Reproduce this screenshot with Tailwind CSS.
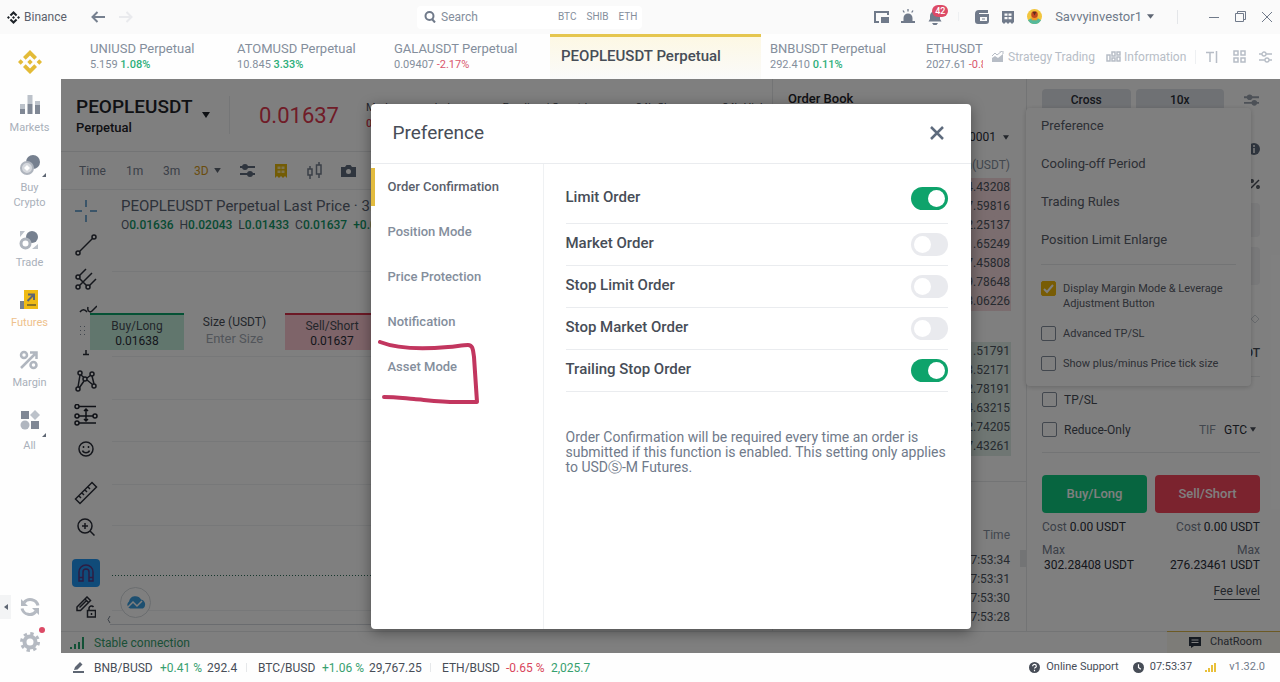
<!DOCTYPE html>
<html lang="en">
<head>
    <meta charset="UTF-8">
    <meta name="viewport" content="width=device-width, initial-scale=1.0">
    <title>Binance - PEOPLEUSDT Perpetual</title>
    <script src="https://cdn.jsdelivr.net/npm/@tailwindcss/browser@4"></script>
</head>
<body class="flex flex-col h-screen overflow-hidden bg-[#fefefe] font-[Roboto,sans-serif] text-[#1e2329] text-xs">

    <!-- Title bar -->
    <header class="flex items-center justify-between h-[34px] shrink-0 bg-[#fafafa]">
        <div class="flex items-center pl-[7px] w-[417px]">
            <svg class="w-[13px] h-[13px]" viewBox="0 0 24 24" fill="#1e2329"><path d="M12 0l7 7-2.7 2.7L12 5.4 7.700 9.700 5 7zM2.700 9.300L5.400 12l-2.700 2.700L0 12zM21.300 9.300L24 12l-2.700 2.700-2.700-2.700zM12 9.300l2.700 2.700-2.700 2.700L9.300 12zM7.700 14.300l4.300 4.300 4.300-4.300L19 17l-7 7-7-7z"/></svg>
            <span class="ml-1 text-[#5a606b]">Binance</span>
            <button class="ml-[24px]" aria-label="Back"><svg class="w-[14px] h-[12px]" viewBox="0 0 14 12" fill="none" stroke="#76808f" stroke-width="2"><path d="M14 6H2M6.500 1L1.500 6l5 5"/></svg></button>
            <button class="ml-[14px]" aria-label="Forward"><svg class="w-[14px] h-[12px]" viewBox="0 0 14 12" fill="none" stroke="#e9eaed" stroke-width="2"><path d="M0 6h12M7.500 1l5 5-5 5"/></svg></button>
        </div>
        <div class="flex items-center w-[225px] h-[23px] bg-white rounded px-[7px] text-[10px] text-[#848e9c]">
            <svg class="w-[12px] h-[12px] shrink-0" viewBox="0 0 12 12" fill="none" stroke="#707a8a" stroke-width="2"><circle cx="5.500" cy="5" r="4"/><path d="M8 8l3 3.500"/></svg>
            <input type="text" aria-label="Search" placeholder="Search" class="ml-[5px] w-[117px] text-xs placeholder:text-[#848e9c] outline-none">
            <a href="#" class="mr-[10px]">BTC</a>
            <a href="#" class="mr-[10px]">SHIB</a>
            <a href="#">ETH</a>
        </div>
        <div class="flex items-center justify-end w-[638px] pr-[8px]">
            <svg class="w-[15px] h-[12px]" viewBox="0 0 15 12" fill="none"><path d="M14 4V1H1v10h4" stroke="#707a8a" stroke-width="2"/><path d="M7 6h8v6H7z" fill="#707a8a"/></svg>
            <svg class="ml-[11px] w-[16px] h-[16px]" viewBox="0 0 16 16" fill="#707a8a"><path d="M3.500 12V9a4.500 4.500 0 019 0v3H15v2H1v-2z"/><path d="M8 0v2.500M3 1.500l1.300 2M13 1.500l-1.300 2" stroke="#707a8a" stroke-width="1.300"/></svg>
            <div class="relative ml-[11px]">
                <svg class="w-[16px] h-[16px]" viewBox="0 0 16 16" fill="#707a8a"><path d="M3 10V7a5 5 0 0110 0v3l1.500 2.500h-13zM5 14h6l-1.500 2h-3z"/></svg>
                <span class="absolute -top-[4px] left-[5px] px-[3px] h-[12px] leading-[12px] rounded-full bg-[#dc4a66] text-white text-[9px] font-medium">42</span>
            </div>
            <span class="ml-[15px] w-px h-[9px] bg-[#eef0f2]"></span>
            <svg class="ml-[16px] w-[14px] h-[14px]" viewBox="0 0 14 14"><path d="M4 0h9v3H4v1h10v7a3 3 0 01-3 3H3a3 3 0 01-3-3V4a4 4 0 014-4z" fill="#707a8a"/><rect x="5" y="7" width="7" height="4" fill="#fafafa"/><path d="M7 8.500h3v1H7z" fill="#707a8a"/></svg>
            <svg class="ml-[13px] w-[12px] h-[14px]" viewBox="0 0 12 14"><path d="M0 1h12v11l-2 2-2-2-2 2-2-2-2 2-2-2z" fill="#707a8a"/><path d="M2.500 3.500h3v2.200h-3zM6.500 3.500h3v2.200h-3zM2.500 7h3v2.200h-3zM6.500 7h3v2.200h-3z" fill="#fafafa"/></svg>
            <svg class="ml-[13px] w-[15px] h-[15px]" viewBox="0 0 16 16"><circle cx="8" cy="8" r="8" fill="#f2c53d"/><path d="M1 12a8 8 0 0014 0l-3-2H4z" fill="#55b99b"/><path d="M4 9h8l-1.500 3h-5z" fill="#eb9928"/><circle cx="8" cy="6" r="3.500" fill="#c0491f"/><path d="M6 3h4l-2 4z" fill="#5b2c1d"/></svg>
            <button class="flex items-center ml-[13px] text-[13px] text-[#707a8a]">Savvyinvestor1
                <svg class="ml-[5px] w-[7px] h-[5px]" viewBox="0 0 8 5" fill="#5e6673"><path d="M0 0h8L4 5z"/></svg>
            </button>
            <span class="ml-[23px] w-px h-[14px] bg-[#e4e6e9]"></span>
            <button class="ml-[31px]" aria-label="Minimize"><svg class="w-[10px] h-[12px]" viewBox="0 0 10 12" stroke="#707a8a"><path d="M0 6.500h10"/></svg></button>
            <button class="ml-[16px]" aria-label="Restore"><svg class="w-[11px] h-[11px]" viewBox="0 0 11 11" fill="none" stroke="#707a8a"><path d="M.5 2.500h8v8h-8zM2.500 2.500v-2h8v8h-2"/></svg></button>
            <button class="ml-[16px]" aria-label="Close window"><svg class="w-[10px] h-[10px]" viewBox="0 0 10 10" stroke="#707a8a"><path d="M0 0l10 10M10 0L0 10"/></svg></button>
        </div>
    </header>

    <div class="flex flex-1 min-h-0">

        <!-- Side navigation -->
        <nav class="relative flex flex-col items-center w-[61px] shrink-0 pr-[2px] text-[11px] text-[#a9b0ba] leading-[15px] text-center">
            <svg class="mt-[16px] w-[24px] h-[24px]" viewBox="0 0 24 24" fill="#e3bb37"><path d="M12 0l7 7-2.700 2.700L12 5.400 7.700 9.700 5 7zM2.700 9.300L5.400 12l-2.700 2.700L0 12zM21.300 9.300L24 12l-2.700 2.700-2.700-2.700zM12 9.300l2.700 2.700-2.700 2.700L9.300 12zM7.700 14.300l4.300 4.300 4.300-4.300L19 17l-7 7-7-7z"/></svg>
            <a href="#" class="flex flex-col items-center gap-[5px] mt-[21px]">
                <svg class="w-[20px] h-[20px]" viewBox="0 0 20 20"><path d="M0 9h5v9H0zM7.500 0h5v9h-5zM15 6h5v5h-5z" fill="#bcc2ca"/><path d="M0 14h5v5H0zM7.500 9h5v10h-5zM15 10h5v9h-5z" fill="#808895"/></svg>
                Markets
            </a>
            <a href="#" class="relative flex flex-col items-center gap-[5px] mt-5">
                <svg class="w-[20px] h-[20px]" viewBox="0 0 20 20"><circle cx="13" cy="7" r="7" fill="#76808f"/><circle cx="7" cy="13" r="6" fill="#d5d8dd" stroke="#aeb4bd" stroke-width="2"/><path d="M7 10l3 3-3 3-3-3z" fill="#fff"/></svg>
                <span class="w-[40px]">Buy Crypto</span>
                <svg class="absolute top-[18px] left-[32px] w-[4px] h-[4px]" viewBox="0 0 4 4" fill="#5e6673"><path d="M4 0v4H0z"/></svg>
            </a>
            <a href="#" class="flex flex-col items-center gap-[5px] mt-5">
                <svg class="w-[20px] h-[20px]" viewBox="0 0 20 20"><circle cx="13" cy="7" r="6" fill="#76808f"/><circle cx="6.500" cy="13.500" r="4.500" fill="#fff" stroke="#aeb4bd" stroke-width="3"/><path d="M1 7V1h5zM19 14v5h-6z" fill="#bcc2ca"/></svg>
                Trade
            </a>
            <a href="#" class="flex flex-col items-center gap-[5px] mt-5 text-[#eec18c]">
                <svg class="w-[20px] h-[20px]" viewBox="0 0 20 20"><path d="M1 11h6v8H1z" fill="#76808f"/><path d="M5 0h14v19H5z" fill="#efbb15"/><path d="M8.500 11l6-6M9 4.500h6V10" fill="none" stroke="#5e6673" stroke-width="2"/><path d="M8 15h9" stroke="#8a7426" stroke-width="2"/></svg>
                Futures
            </a>
            <a href="#" class="flex flex-col items-center gap-[5px] mt-5">
                <svg class="w-[20px] h-[20px]" viewBox="0 0 20 20" fill="none" stroke="#b0b6bf" stroke-width="2.500"><circle cx="5" cy="5" r="3"/><circle cx="14.500" cy="15" r="3"/><path d="M2 18L16 4M11 2.500h6.500V9"/></svg>
                Margin
            </a>
            <a href="#" class="relative flex flex-col items-center gap-[8px] mt-5">
                <svg class="w-[20px] h-[20px]" viewBox="0 0 20 20"><path d="M1 1h8v8H1zM11 11h8v8h-8z" fill="#808895"/><path d="M15 0l5 5-5 5-5-5z" fill="#bcc2ca"/><circle cx="5" cy="15" r="4.500" fill="#b0b6bf"/></svg>
                All
                <svg class="absolute top-[23px] left-[22px] w-[4px] h-[4px]" viewBox="0 0 4 4" fill="#5e6673"><path d="M4 0v4H0z"/></svg>
            </a>
            <button class="mt-auto" aria-label="Refresh"><svg class="w-[20px] h-[20px]" viewBox="0 0 20 20" fill="none" stroke="#b5bac2" stroke-width="3"><path d="M18 8.500A8 8 0 004 5.500M2 11.500a8 8 0 0014 3"/><path d="M1 2v7h7zM19 18v-7h-7z" fill="#b5bac2" stroke="none"/></svg></button>
            <button class="relative mt-[15px] mb-px" aria-label="Settings">
                <svg class="w-[20px] h-[20px]" viewBox="0 0 20 20" fill="none" stroke="#b5bac2"><circle cx="10" cy="10" r="5.500" stroke-width="4"/><circle cx="10" cy="10" r="8.500" stroke-width="3" stroke-dasharray="3.340 3.340"/></svg>
                <span class="absolute -top-[5px] left-[19px] w-[6px] h-[6px] rounded-full bg-[#dc4a66]"></span>
            </button>
            <button class="absolute left-0 bottom-[34px] w-[11px] h-[24px] bg-[#f3f4f5] flex items-center justify-center" aria-label="Collapse menu"><svg class="w-[4px] h-[6px]" viewBox="0 0 4 6" fill="#5e6673"><path d="M4 0v6L0 3z"/></svg></button>
        </nav>

        <main class="flex flex-col flex-1 min-w-0">

            <!-- Market tabs -->
            <div class="flex items-center h-[45px] shrink-0">
                <div class="flex flex-1 h-full min-w-0 overflow-hidden pl-[29px] whitespace-nowrap text-[11px] leading-[15px] text-[#848e9c]">
                    <a href="#" class="w-[147px] shrink-0 pt-[6px]"><span class="block text-[13px] leading-[17px]">UNIUSD Perpetual</span>5.159 <span class="text-[#2dae7a] font-medium">1.08%</span></a>
                    <a href="#" class="w-[157px] shrink-0 pt-[6px]"><span class="block text-[13px] leading-[17px]">ATOMUSD Perpetual</span>10.845 <span class="text-[#2dae7a] font-medium">3.33%</span></a>
                    <a href="#" class="w-[156px] shrink-0 pt-[6px]"><span class="block text-[13px] leading-[17px]">GALAUSDT Perpetual</span>0.09407 <span class="text-[#d9566c]">-2.17%</span></a>
                    <a href="#" class="flex items-center w-[211px] shrink-0 px-[11px] pb-[4px] border-t-[3px] border-[#e5c64f] bg-linear-to-b from-[#fdf8e4] to-[#fafafa] text-[15px] font-medium text-[#474d57]">PEOPLEUSDT Perpetual</a>
                    <a href="#" class="w-[165px] shrink-0 pl-[9px] pt-[6px]"><span class="block text-[13px] leading-[17px]">BNBUSDT Perpetual</span>292.410 <span class="text-[#2dae7a] font-medium">0.11%</span></a>
                    <a href="#" class="w-[157px] shrink-0 pt-[6px]"><span class="block text-[13px] leading-[17px]">ETHUSDT Perpetual</span>2027.61 <span class="text-[#d9566c]">-0.82%</span></a>
                </div>
                <div class="flex items-center w-[297px] shrink-0 pl-[9px] pr-[8px] text-[#b7bdc6]">
                    <button class="flex items-center"><svg class="w-[12px] h-[12px] mr-1" viewBox="0 0 12 12"><path d="M0 11V7l3-2 3 2 5-4v8z" fill="#b7bdc6"/><path d="M0 5l3-3 2 2 5-4M7.500 0H11v3" fill="none" stroke="#b7bdc6"/></svg>Strategy Trading</button>
                    <button class="flex items-center ml-[11px]"><svg class="w-[15px] h-[11px] mr-[3px]" viewBox="0 0 15 11" fill="none" stroke="#b7bdc6" stroke-width="1.500"><path d="M1 4h3v6H1zM6 1h3v4H6zM6 7h3v3H6zM11 1h3v3h-3zM11 6h3v4h-3z"/></svg>Information</button>
                    <span class="ml-[9px] w-px h-[14px] bg-[#eef0f2]"></span>
                    <button class="ml-[10px]" aria-label="Text size"><svg class="w-[12px] h-[12px]" viewBox="0 0 12 12" fill="none" stroke="#b7bdc6" stroke-width="1.500"><path d="M0 1.500h8M4 1.500V11M10.500 0v12"/></svg></button>
                    <button class="ml-auto" aria-label="Layout"><svg class="w-[13px] h-[13px]" viewBox="0 0 13 13" fill="none" stroke="#b7bdc6" stroke-width="1.500"><path d="M1 1h4v4H1zM8 1h4v4H8zM1 8h4v4H1zM8 8h4v4H8z"/></svg></button>
                    <button class="ml-[13px]" aria-label="Display options"><svg class="w-[13px] h-[12px]" viewBox="0 0 13 12" fill="none" stroke="#b7bdc6" stroke-width="1.300"><path d="M0 3h3M7 3h6M0 9h6M10 9h3"/><circle cx="5" cy="3" r="2"/><circle cx="8" cy="9" r="2"/></svg></button>
                </div>
            </div>

            <!-- Trading workspace -->
            <div class="relative flex flex-col flex-1 min-h-0 bg-white">
                <div class="flex flex-1 min-h-0">

                    <!-- Chart -->
                    <section class="flex flex-col flex-1 min-w-0 overflow-hidden">
                        <div class="flex h-[73px] shrink-0 border-b border-[#e6e8ea] pl-[15px] whitespace-nowrap">
                            <div class="flex items-center w-[154px] shrink-0 my-[17px] border-r border-[#eaecef]">
                                <div class="pt-[4px]">
                                    <h1 class="text-[19px] leading-[22px] font-medium">PEOPLEUSDT</h1>
                                    <p class="text-[13px] leading-[20px] font-medium">Perpetual</p>
                                </div>
                                <svg class="ml-[9px] w-[8px] h-[6px]" viewBox="0 0 8 6" fill="#1e2329"><path d="M0 0h8L4 6z"/></svg>
                            </div>
                            <p class="pl-[29px] w-[136px] shrink-0 text-[22px] leading-[73px] text-[#e0394f]">0.01637</p>
                            <dl class="flex gap-[28px] pt-[21px] text-[11px] leading-[16px] text-[#474d57]">
                                <div><dt>Mark</dt><dd class="text-[#e0394f] font-medium">0.01638</dd></div>
                                <div><dt>Index</dt><dd>0.01637</dd></div>
                                <div><dt>Funding / Countdown</dt><dd>0.0100%</dd></div>
                                <div><dt>24h Change</dt><dd>0.00012</dd></div>
                                <div><dt>24h High</dt><dd>0.01668</dd></div>
                            </dl>
                        </div>
                        <div class="flex items-center h-[38px] shrink-0 border-b border-[#eaecef] pl-[18px] text-[#76808f]">
                            <button class="w-[47px] text-left">Time</button>
                            <button class="w-[37px] text-left">1m</button>
                            <button class="w-[31px] text-left">3m</button>
                            <button class="flex items-center w-[46px] text-[#d49a1c]">3D<svg class="ml-[5px] w-[7px] h-[5px]" viewBox="0 0 8 6" fill="#5e6673"><path d="M0 0h8L4 6z"/></svg></button>
                            <button aria-label="Indicator settings"><svg class="w-[15px] h-[13px]" viewBox="0 0 15 13" stroke="#5e6b7d" stroke-width="2" fill="#5e6b7d"><path d="M0 3h15M0 10h15"/><circle cx="5" cy="3" r="2"/><circle cx="10" cy="10" r="2"/></svg></button>
                            <button class="ml-[20px]" aria-label="Calculator"><svg class="w-[12px] h-[14px]" viewBox="0 0 12 14"><path d="M0 0h12v14l-2-2-2 2-2-2-2 2-2-2-2 2z" fill="#e6b80b"/><path d="M2.500 2.500h3v2.500h-3zM6.500 2.500h3v2.500h-3zM2.500 6.500h3v2.500h-3zM6.500 6.500h3v2.500h-3z" fill="#fbe8a0"/></svg></button>
                            <button class="ml-[20px]" aria-label="Chart type"><svg class="w-[16px] h-[17px]" viewBox="0 0 16 17" fill="none" stroke="#76808f" stroke-width="1.500"><path d="M1 7h4v6H1zM9.500 3h4.500v9H9.500zM3 4v3M3 13v4M12 0v3M12 12v4"/></svg></button>
                            <button class="ml-[18px]" aria-label="Screenshot"><svg class="w-[15px] h-[12px]" viewBox="0 0 15 12"><path d="M0 2h4l1.500-2h4L11 2h4v10H0z" fill="#5e6b7d"/><circle cx="7.500" cy="6.500" r="2.500" fill="#fff"/></svg></button>
                        </div>
                        <div class="relative flex flex-1 min-h-0">
                            <div class="flex flex-col items-center w-[49px] shrink-0 pt-[4px] text-[#1e2329]">
                                <button class="grid place-items-center h-[34px]" aria-label="Crosshair"><svg class="w-[22px] h-[22px]" viewBox="0 0 22 22" fill="none" stroke="#4a90c4" stroke-width="1.500"><path d="M11 0v7M11 15v7M0 11h7M15 11h7"/></svg></button>
                                <button class="grid place-items-center h-[34px]" aria-label="Trend line"><svg class="w-[22px] h-[22px]" viewBox="0 0 22 22" fill="none" stroke="#2a2e39" stroke-width="1.500"><circle cx="3" cy="19" r="2"/><circle cx="19" cy="3" r="2"/><path d="M4.500 17.500l13-13"/></svg></button>
                                <button class="grid place-items-center h-[34px]" aria-label="Pitchfork"><svg class="w-[22px] h-[22px]" viewBox="0 0 22 22" fill="none" stroke="#2a2e39" stroke-width="1.500"><circle cx="3" cy="9" r="2"/><circle cx="3" cy="19" r="2"/><circle cx="13" cy="19" r="2"/><path d="M4.500 7.500L11 1M4.500 17.500L17 5M14.500 17.500L21 11M4.500 10.500l7 7"/></svg></button>
                                <button class="grid place-items-center h-[34px]" aria-label="Brush"><svg class="w-[22px] h-[22px]" viewBox="0 0 22 22" fill="none" stroke="#2a2e39" stroke-width="1.500"><path d="M5 10c2-3 5-3 7 0M13 5c-1 4 2 6 4 4l5-5M4 18c3 2 8 0 8-5"/></svg></button>
                                <button class="grid place-items-center h-[34px]" aria-label="Text"><svg class="w-[22px] h-[22px]" viewBox="0 0 22 22" fill="none" stroke="#2a2e39" stroke-width="1.500"><path d="M3 4V1h16v3M11 1v18M8 18.500h6"/></svg></button>
                                <button class="grid place-items-center h-[34px]" aria-label="Patterns"><svg class="w-[22px] h-[22px]" viewBox="0 0 22 22" fill="none" stroke="#2a2e39" stroke-width="1.500"><circle cx="5" cy="3" r="2"/><circle cx="17" cy="4" r="2"/><circle cx="10" cy="9" r="2"/><circle cx="3" cy="19" r="2"/><circle cx="19" cy="16" r="2"/><path d="M5 5L3 17M4.500 17.500L9 11M6 5l3 2.500M12 8l4-3M12 10l5.500 4.500M17 6l2 8"/></svg></button>
                                <button class="grid place-items-center h-[34px]" aria-label="Forecast"><svg class="w-[24px] h-[22px]" viewBox="0 0 24 22" fill="none" stroke="#1e222d" stroke-width="1.500"><circle cx="3" cy="2.500" r="2"/><circle cx="3" cy="12" r="2"/><circle cx="3" cy="19" r="2"/><circle cx="21" cy="12" r="2"/><path d="M5 2.500h17M5 12h14M5 19h17M12 5v12M10 7l2-2 2 2M10 15l2 2 2-2"/></svg></button>
                                <button class="grid place-items-center h-[34px]" aria-label="Icons"><svg class="w-[16px] h-[16px]" viewBox="0 0 16 16" fill="none" stroke="#2a2e39" stroke-width="1.500"><circle cx="8" cy="8" r="7"/><path d="M4.500 9.500c1 3 6 3 7 0M5.500 5v2M10.500 5v2"/></svg></button>
                                <button class="grid place-items-center h-[34px] mt-[10px]" aria-label="Measure"><svg class="w-[24px] h-[24px]" viewBox="0 0 24 24" fill="none" stroke="#2a2e39" stroke-width="1.500"><path d="M1.500 18L18 1.500 22.500 6 6 22.500zM5 15l2 2M8 12l2 2M11 9l2 2M14 6l2 2"/></svg></button>
                                <button class="grid place-items-center h-[34px]" aria-label="Zoom in"><svg class="w-[18px] h-[18px]" viewBox="0 0 18 18" fill="none" stroke="#2a2e39" stroke-width="1.500"><circle cx="8" cy="8" r="7"/><path d="M13 13l4.500 4.500M8 5v6M5 8h6"/></svg></button>
                                <button class="grid place-items-center w-[28px] h-[28px] mt-[15px] rounded bg-[#2196f3]" aria-label="Magnet"><svg class="w-[16px] h-[18px]" viewBox="0 0 16 18" fill="none" stroke="#5a3a86" stroke-width="1.500"><path d="M1 17V8a7 7 0 0114 0v9h-4V8a3 3 0 00-6 0v9zM1 13.500h4M11 13.500h4"/></svg></button>
                                <button class="grid place-items-center h-[34px] mt-[3px]" aria-label="Lock drawings"><svg class="w-[20px] h-[22px]" viewBox="0 0 20 22" fill="none" stroke="#2a2e39" stroke-width="1.500"><path d="M1 11L11 1l3.500 3.500-10 10H1zM9 3l3.500 3.500M3.500 11.500L10 5"/><path d="M11.500 14.500h8V21h-8zM13 14.500V12a2.500 2.500 0 014.500-1M15.500 17v2"/></svg></button>
                            </div>
                            <div class="flex-1">
                                <svg class="w-full h-full" fill="none" stroke="#eff1f3"><path d="M2 81.500h800M2 166.500h800M2 209.500h800M2 251.500h800M2 294.500h800M2 335.500h800M2 420.500h800"/><path d="M0 434.500h800" stroke="#d5d9de"/><path d="M2 385.500h800" stroke="#2d6f5b" stroke-dasharray="1 2"/></svg>
                            </div>
                            <div class="absolute top-[7px] left-[60px] whitespace-nowrap">
                                <p class="text-[15px] leading-[19px] text-[#5a6474]">PEOPLEUSDT Perpetual Last Price · 3D</p>
                                <p class="flex gap-[6px] text-xs leading-[19px] text-[#5a6474]">
                                    <span>O<span class="text-[#119667] font-medium">0.01636</span></span>
                                    <span>H<span class="text-[#119667] font-medium">0.02043</span></span>
                                    <span>L<span class="text-[#119667] font-medium">0.01433</span></span>
                                    <span>C<span class="text-[#119667] font-medium">0.01637</span></span>
                                    <span class="text-[#119667] font-medium">+0.00001</span>
                                </p>
                            </div>
                            <div class="absolute top-[123px] left-[13px] flex h-[37px] bg-white text-[#2a2e39] leading-[15px] text-center">
                                <svg class="w-[16px] h-full" viewBox="0 0 16 37" fill="#848e9c"><path d="M6 13h1v1H6zM10 13h1v1h-1zM6 17h1v1H6zM10 17h1v1h-1zM6 21h1v1H6zM10 21h1v1h-1z"/></svg>
                                <button class="w-[94px] pt-[3px] border-t-2 border-[#0ba56a] bg-[#c3eddb]"><span class="block text-[#474d57]">Buy/Long</span>0.01638</button>
                                <div class="flex flex-col w-[101px] pt-[1px]">
                                    <label for="size" class="leading-[17px] text-[#474d57]">Size (USDT)</label>
                                    <input id="size" type="text" placeholder="Enter Size" class="w-full text-center text-[13px] leading-[15px] placeholder:text-[#a4abb5] outline-none">
                                </div>
                                <button class="w-[94px] pt-[3px] border-t-2 border-[#d8304a] bg-[#fcc9d2]"><span class="block text-[#474d57]">Sell/Short</span>0.01637</button>
                            </div>
                            <button class="absolute bottom-[13px] left-[59px] grid place-items-center w-[31px] h-[31px] rounded-full bg-white border border-[#d5dade]" aria-label="TradingView"><svg class="w-[20px] h-[13px]" viewBox="0 0 20 13"><path d="M4 12.500a4 4 0 01-1-7 6.500 6.500 0 0112-2 5 5 0 012 9z" fill="#3b9fe0"/><path d="M2 11l5-5 4 4 5-5" fill="none" stroke="#fff" stroke-width="1.500"/></svg></button>
                            <svg class="absolute bottom-[8px] left-[46px] w-[4px] h-[7px]" viewBox="0 0 4 7" fill="none" stroke="#76808f"><path d="M3 0L1 3.500 3 7"/></svg>
                        </div>
                    </section>

                    <!-- Order book and trades -->
                    <section class="flex flex-col w-[254px] shrink-0 overflow-hidden border-l border-[#e6e8ea]">
                        <div class="h-[403px] shrink-0 border-b border-[#e6e8ea]">
                            <h2 class="pl-[15px] pt-[10px] text-[13px] leading-5 font-medium">Order Book</h2>
                            <div class="flex items-center justify-end mt-[18px] pr-[17px] h-5">
                                <select aria-label="Price step" class="appearance-none w-[54px] text-right text-[#2a2e39]"><option>0.000001</option></select>
                                <svg class="ml-[7px] w-[6px] h-[5px]" viewBox="0 0 8 6" fill="#474d57"><path d="M0 0h8L4 6z"/></svg>
                            </div>
                            <table class="w-full mt-[6px] text-right leading-[19px] text-[#4d5560]">
                                <thead><tr class="h-[25px] text-[#848e9c]"><th class="pr-[16px] font-normal text-right">Sum(USDT)</th></tr></thead>
                                <tbody class="bg-linear-to-l from-white from-[15px] to-[#f6dade] to-[15px]">
                                    <tr><td class="pr-[16px]">14.43208</td></tr>
                                    <tr><td class="pr-[16px]">57.59816</td></tr>
                                    <tr><td class="pr-[16px]">42.25137</td></tr>
                                    <tr><td class="pr-[16px]">31.65249</td></tr>
                                    <tr><td class="pr-[16px]">27.45808</td></tr>
                                    <tr><td class="pr-[16px]">19.78648</td></tr>
                                    <tr><td class="pr-[16px]">13.06226</td></tr>
                                </tbody>
                            </table>
                            <table class="w-full mt-[31px] text-right leading-[19px] text-[#4d5560]">
                                <tbody class="bg-linear-to-l from-white from-[15px] to-[#deede7] to-[15px]">
                                    <tr><td class="pr-[16px]">11.51791</td></tr>
                                    <tr><td class="pr-[16px]">23.52171</td></tr>
                                    <tr><td class="pr-[16px]">32.78191</td></tr>
                                    <tr><td class="pr-[16px]">44.63215</td></tr>
                                    <tr><td class="pr-[16px]">52.74205</td></tr>
                                    <tr><td class="pr-[16px]">67.43261</td></tr>
                                </tbody>
                            </table>
                        </div>
                        <div class="relative">
                            <table class="w-full mt-[44px] text-right leading-[19px] text-[#4d5560]">
                                <thead><tr class="h-[25px] align-top text-[#848e9c]"><th class="pr-[16px] font-normal text-right">Time</th></tr></thead>
                                <tbody>
                                    <tr><td class="pr-[16px]">07:53:34</td></tr>
                                    <tr><td class="pr-[16px]">07:53:31</td></tr>
                                    <tr><td class="pr-[16px]">07:53:30</td></tr>
                                    <tr><td class="pr-[16px]">07:53:28</td></tr>
                                    <tr><td class="pr-[16px]">07:53:24</td></tr>
                                </tbody>
                            </table>
                            <span class="absolute top-[68px] right-0 w-[6px] h-[17px] bg-[#e6e8ea]"></span>
                        </div>
                    </section>

                    <!-- Order form -->
                    <section class="relative w-[254px] shrink-0 border-l border-[#e6e8ea] pl-[15px] pr-5 text-[#474d57]">
                        <div class="flex items-start gap-[5px] mt-[10px] h-[54px]">
                            <button class="flex-1 h-[22px] rounded-sm bg-[#dfe3e8] font-medium text-[#2a2e39]">Cross</button>
                            <button class="flex-1 h-[22px] rounded-sm bg-[#dfe3e8] font-medium text-[#2a2e39]">10x</button>
                            <button class="ml-[15px] pr-px pt-[4px]" aria-label="Form settings"><svg class="w-[15px] h-[14px]" viewBox="0 0 16 14" stroke="#9aa3af" stroke-width="2" fill="#9aa3af"><path d="M0 4h16M0 10h16"/><circle cx="6" cy="4" r="2"/><circle cx="11" cy="10" r="2"/></svg></button>
                        </div>
                        <div class="flex flex-col items-end h-[60px]">
                            <svg class="w-[12px] h-[12px]" viewBox="0 0 12 12"><circle cx="6" cy="6" r="6" fill="#5e6b7d"/><path d="M6 5v5M6 2v2" stroke="#fff" stroke-width="1.500"/></svg>
                            <svg class="mt-[24px] w-[10px] h-[10px]" viewBox="0 0 10 10" fill="none" stroke="#474d57" stroke-width="1.500"><path d="M1 9l8-8"/><circle cx="2" cy="2" r="1.200"/><circle cx="8" cy="8" r="1.200"/></svg>
                        </div>
                        <div class="h-[34px] rounded bg-[#f2f3f5]"></div>
                        <div class="h-[38px] mt-[10px] rounded bg-[#f2f3f5]"></div>
                        <div class="flex justify-end h-[58px] pt-[29px]"><svg class="w-[10px] h-[10px]" viewBox="0 0 10 10" fill="none" stroke="#d0d5db"><path d="M5 1l4 4-4 4-4-4z"/></svg></div>
                        <div class="flex justify-end h-[34px] border-b border-[#e6e8ea] pt-[2px] font-medium text-[#474d57]">USDT</div>
                        <label class="flex items-center gap-[7px] mt-[15px] h-[15px]"><input type="checkbox" class="appearance-none w-[15px] h-[15px] border border-[#848e9c] rounded-xs">TP/SL</label>
                        <div class="flex items-center justify-between h-[15px] mt-[15px]">
                            <label class="flex items-center gap-[7px]"><input type="checkbox" class="appearance-none w-[15px] h-[15px] border border-[#848e9c] rounded-xs">Reduce-Only</label>
                            <div class="flex items-center pr-[4px]">
                                <label for="tif" class="mr-[8px] text-[#848e9c]">TIF</label>
                                <select id="tif" class="appearance-none text-[#2a2e39]"><option>GTC</option></select>
                                <svg class="ml-[3px] w-[6px] h-[5px]" viewBox="0 0 8 6" fill="#474d57"><path d="M0 0h8L4 6z"/></svg>
                            </div>
                        </div>
                        <div class="grid grid-cols-2 gap-[8px] mt-[15px] pt-[22px] border-t border-[#e6e8ea] text-[13px] font-medium text-white">
                            <button class="h-[38px] rounded bg-[#0ecb81]">Buy/Long</button>
                            <button class="h-[38px] rounded bg-[#f6465d]">Sell/Short</button>
                        </div>
                        <div class="flex justify-between mt-[7px] leading-[15px] text-[#76808f]">
                            <p>Cost <span class="text-[#2a2e39]">0.00 USDT</span></p>
                            <p>Cost <span class="text-[#2a2e39]">0.00 USDT</span></p>
                        </div>
                        <div class="flex justify-between mt-[8px] leading-[15px] text-[#76808f]">
                            <p>Max<span class="block pl-[2px] text-[#2a2e39]">302.28408 USDT</span></p>
                            <p class="text-right">Max<span class="block text-[#2a2e39]">276.23461 USDT</span></p>
                        </div>
                        <div class="mt-[10px] text-right"><a href="#" class="inline-block leading-[15px] border-b border-[#474d57]">Fee level</a></div>

                        <!-- Settings menu -->
                        <div class="absolute top-[29px] -left-px w-[225px] h-[278px] bg-white rounded-sm shadow-[0_1px_5px_rgba(0,0,0,0.2)] px-[15px] text-[#5a606b]">
                            <div class="flex flex-col items-start gap-[18px] pt-[8px] text-[13px] leading-5">
                                <button>Preference</button>
                                <button>Cooling-off Period</button>
                                <button>Trading Rules</button>
                                <button>Position Limit Enlarge</button>
                            </div>
                            <div class="flex flex-col gap-[15px] mt-[14px] pt-[16px] border-t border-[#e6e8ea] text-[11px] leading-[15px] whitespace-nowrap">
                                <label class="flex gap-[7px]">
                                    <span class="grid w-[15px] h-[15px]">
                                        <input type="checkbox" checked class="peer appearance-none col-start-1 row-start-1 w-[15px] h-[15px] border border-[#848e9c] rounded-xs checked:bg-[#f0b90b] checked:border-[#f0b90b]">
                                        <svg class="hidden peer-checked:block col-start-1 row-start-1 w-[15px] h-[15px] pointer-events-none" viewBox="0 0 15 15" fill="none" stroke="#fff" stroke-width="2"><path d="M3 8l3 3 6-7"/></svg>
                                    </span>
                                    <span>Display Margin Mode &amp; Leverage<br>Adjustment Button</span>
                                </label>
                                <label class="flex gap-[7px]"><input type="checkbox" class="appearance-none w-[15px] h-[15px] border border-[#848e9c] rounded-xs">Advanced TP/SL</label>
                                <label class="flex gap-[7px]"><input type="checkbox" class="appearance-none w-[15px] h-[15px] border border-[#848e9c] rounded-xs">Show plus/minus Price tick size</label>
                            </div>
                        </div>
                    </section>
                </div>

                <!-- Connection bar -->
                <div class="flex items-center h-[22px] shrink-0 border-t border-[#e6e8ea] pl-[9px] text-[#36a06f]">
                    <svg class="w-[15px] h-[12px]" viewBox="0 0 15 12" fill="#25a26c"><path d="M0 10h2v2H0zM4 7h2v5H4zM8 5h2v7H8zM12 0h2v12h-2z"/></svg>
                    <span class="ml-[9px]">Stable connection</span>
                    <button class="flex items-center gap-[9px] self-stretch w-[113px] ml-auto -mt-px pl-[22px] border-t border-[#d9b44a] bg-[#fbf9f0] text-[11px] text-[#474d57]">
                        <svg class="w-[12px] h-[11px]" viewBox="0 0 12 11"><path d="M0 0h12v9H5l-3 2V9H0z" fill="#2a3442"/><path d="M2.500 3h7M2.500 5.500h7" stroke="#fff"/></svg>
                        ChatRoom
                    </button>
                </div>

                <!-- Preference dialog -->
                <div class="absolute inset-0 flex items-center justify-center bg-black/50">
                    <div role="dialog" aria-labelledby="dialog-title" class="relative flex flex-col w-[600px] h-[525px] rounded bg-white shadow-[0_3px_14px_rgba(0,0,0,0.4)]">
                        <div class="flex items-center justify-between h-[60px] shrink-0 pl-[22px] pr-[27px] border-b border-[#eaecef]">
                            <h2 id="dialog-title" class="text-[19px] text-[#474d57]">Preference</h2>
                            <button aria-label="Close"><svg class="w-[14px] h-[14px]" viewBox="0 0 14 14" stroke="#5e6b7d" stroke-width="2.500"><path d="M1 1l12 12M13 1L1 13"/></svg></button>
                        </div>
                        <div class="flex flex-1">
                            <div class="flex flex-col gap-[7px] w-[173px] pt-[4px] border-r border-[#eff1f3] text-[13px] font-medium text-[#848e9c]">
                                <button class="h-[38px] pl-[13px] text-left border-l-4 border-[#e2bb3f] text-[#5a606b]">Order Confirmation</button>
                                <button class="h-[38px] pl-[17px] text-left">Position Mode</button>
                                <button class="h-[38px] pl-[17px] text-left">Price Protection</button>
                                <button class="h-[38px] pl-[17px] text-left">Notification</button>
                                <button class="h-[38px] pl-[17px] text-left">Asset Mode</button>
                            </div>
                            <div class="flex-1 pl-[22px] pr-[23px] pt-[10px] text-[15px] font-medium text-[#474d57]">
                                <label class="flex items-center justify-between h-[50px] border-b border-[#eaecef]">Limit Order
                                    <input type="checkbox" role="switch" checked class="appearance-none w-[37px] h-[23px] rounded-full bg-[#e9eaee] checked:bg-[#0ea36b] before:block before:w-[17px] before:h-[17px] before:m-[3px] before:rounded-full before:bg-white checked:before:ml-[17px]">
                                </label>
                                <label class="flex items-center justify-between h-[42px] border-b border-[#eaecef]">Market Order
                                    <input type="checkbox" role="switch" class="appearance-none w-[37px] h-[23px] rounded-full bg-[#e9eaee] checked:bg-[#0ea36b] before:block before:w-[17px] before:h-[17px] before:m-[3px] before:rounded-full before:bg-white checked:before:ml-[17px]">
                                </label>
                                <label class="flex items-center justify-between h-[42px] border-b border-[#eaecef]">Stop Limit Order
                                    <input type="checkbox" role="switch" class="appearance-none w-[37px] h-[23px] rounded-full bg-[#e9eaee] checked:bg-[#0ea36b] before:block before:w-[17px] before:h-[17px] before:m-[3px] before:rounded-full before:bg-white checked:before:ml-[17px]">
                                </label>
                                <label class="flex items-center justify-between h-[42px] border-b border-[#eaecef]">Stop Market Order
                                    <input type="checkbox" role="switch" class="appearance-none w-[37px] h-[23px] rounded-full bg-[#e9eaee] checked:bg-[#0ea36b] before:block before:w-[17px] before:h-[17px] before:m-[3px] before:rounded-full before:bg-white checked:before:ml-[17px]">
                                </label>
                                <label class="flex items-center justify-between h-[42px] border-b border-[#eaecef]">Trailing Stop Order
                                    <input type="checkbox" role="switch" checked class="appearance-none w-[37px] h-[23px] rounded-full bg-[#e9eaee] checked:bg-[#0ea36b] before:block before:w-[17px] before:h-[17px] before:m-[3px] before:rounded-full before:bg-white checked:before:ml-[17px]">
                                </label>
                                <p class="mt-[38px] text-sm leading-[15px] font-normal text-[#707a8a] whitespace-nowrap">Order Confirmation will be required every time an order is<br>submitted if this function is enabled. This setting only applies<br>to USDⓈ-M Futures.</p>
                            </div>
                        </div>
                        <!-- Marker stroke around Asset Mode -->
                        <svg class="absolute left-[5px] top-[236px] w-[110px] h-[70px] pointer-events-none" viewBox="0 0 110 70" fill="none" stroke="#c2365f" stroke-width="4" stroke-linecap="round" stroke-linejoin="round"><path d="M4 2C22 9 50 9 72 7C82 6 88 5 92 5C97 5 97 10 98 17L101 62L80 62C66 62 50 60 38 59C26 58 18 57 8 57"/></svg>
                    </div>
                </div>
            </div>
        </main>
    </div>

    <!-- Ticker footer -->
    <footer class="flex items-center h-[29px] shrink-0 pl-[73px] pr-[15px] bg-[#fefefe] text-[#474d57]">
        <svg class="w-[11px] h-[11px]" viewBox="0 0 11 11" fill="#5e6673"><path d="M0 9h11v2H0zM1 8l1-3 5-5 2.500 2.500-5 5z"/></svg>
        <span class="ml-[10px] w-[66px]">BNB/BUSD</span>
        <span class="w-[47px] text-[#36a06f]">+0.41 %</span>
        <span class="w-[39px]">292.4</span>
        <span class="w-px h-[9px] mr-[11px] bg-[#e6e8ea]"></span>
        <span class="w-[64px]">BTC/BUSD</span>
        <span class="w-[47px] text-[#36a06f]">+1.06 %</span>
        <span class="w-[61px]">29,767.25</span>
        <span class="w-px h-[9px] mr-[11px] bg-[#e6e8ea]"></span>
        <span class="w-[64px]">ETH/BUSD</span>
        <span class="w-[45px] text-[#d9465c]">-0.65 %</span>
        <span class="text-[#36a06f]">2,025.7</span>
        <div class="flex items-center ml-auto text-[11px]">
            <a href="#" class="flex items-center gap-[6px]"><svg class="w-[11px] h-[11px]" viewBox="0 0 12 12"><circle cx="6" cy="6" r="6" fill="#474d57"/><path d="M4 4.500a2 2 0 114 0c0 1.500-2 1.300-2 2.700M6 8.500V10" fill="none" stroke="#fff" stroke-width="1.300"/></svg>Online Support</a>
            <span class="flex items-center gap-[6px] ml-[14px]"><svg class="w-[11px] h-[11px]" viewBox="0 0 12 12"><circle cx="6" cy="6" r="6" fill="#474d57"/><path d="M6 2.500V6l2.500 2" fill="none" stroke="#fff" stroke-width="1.300"/></svg>07:53:37</span>
            <svg class="ml-[13px] w-[12px] h-[9px]" viewBox="0 0 12 9" fill="#e9c03a"><path d="M0 7h2v2H0zM3 5h2v4H3zM6 2h2v7H6zM9 0h2v9H9z"/></svg>
            <span class="ml-[12px] text-[#707a8a]">v1.32.0</span>
        </div>
    </footer>
</body>
</html>
